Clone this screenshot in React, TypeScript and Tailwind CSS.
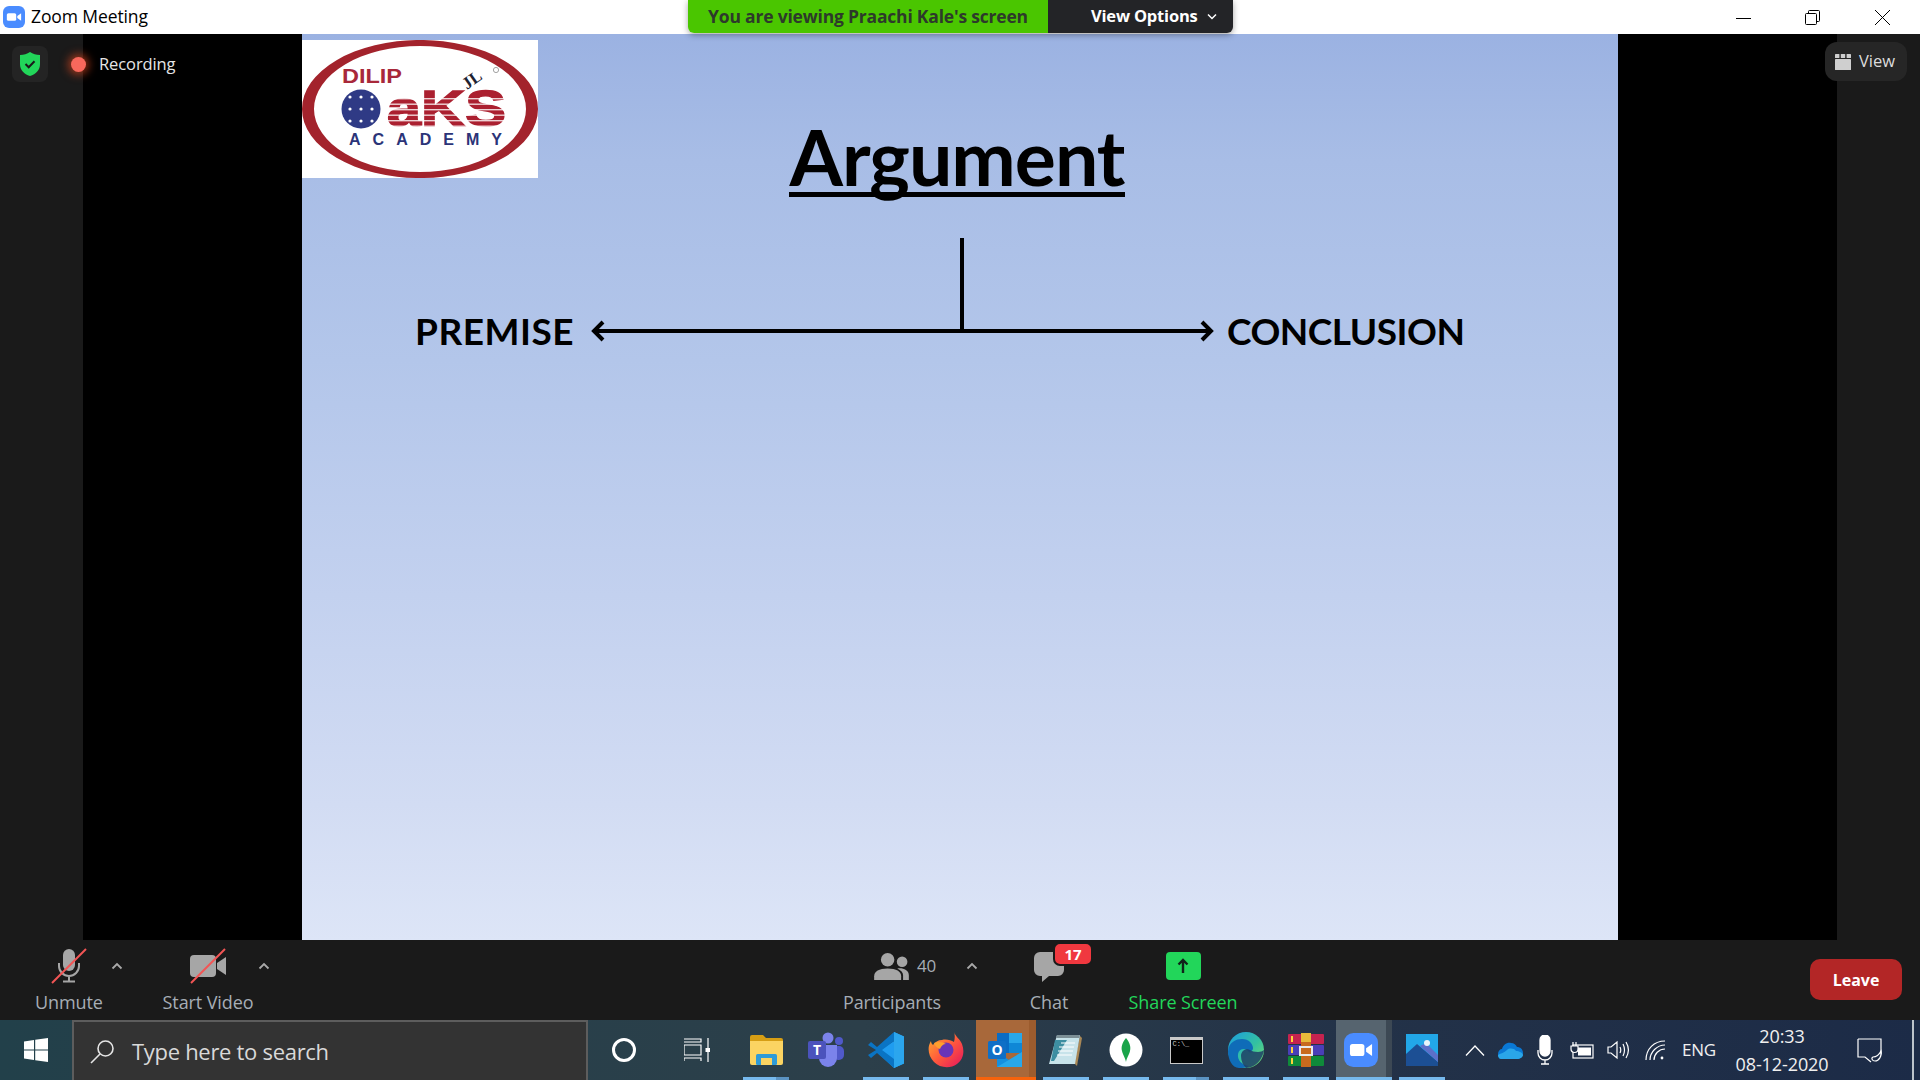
import React from "react";

const ui = "font-['Open_Sans','Noto_Sans',sans-serif]";

function ZoomGlyph({ size = 18 }: { size?: number }) {
  return (
    <svg width={size} height={size} viewBox="0 0 40 40">
      <rect width="40" height="40" rx="11" fill="#4a8cff" />
      <rect x="7" y="13" width="17" height="14" rx="3" fill="#fff" />
      <path d="M26 18l7-5v14l-7-5z" fill="#fff" />
    </svg>
  );
}

function Caret() {
  return (
    <div className="w-[14px] h-[44px] flex items-center justify-center">
      <svg width="12" height="8" viewBox="0 0 12 8" fill="none" stroke="#a9a9a9" strokeWidth="1.8">
        <path d="M1.5 6.5L6 2l4.5 4.5" />
      </svg>
    </div>
  );
}

function Logo() {
  const stripes = [98, 103.5, 109, 114.5, 120, 125.5];
  return (
    <svg width="236" height="138" viewBox="302 40 236 138" className="block">
      <rect x="302" y="40" width="236" height="138" fill="#fff" />
      <path fillRule="evenodd" d="M302 109a118 69 0 10236 0a118 69 0 10-236 0zM314 109a106 63 0 10212 0a106 63 0 10-212 0z" fill="#a3232c" />
      <text x="342" y="83" fontFamily="'Liberation Sans',sans-serif" fontWeight="700" fontSize="21" fill="#a8283a" textLength="60" lengthAdjust="spacingAndGlyphs">DILIP</text>
      <circle cx="361" cy="109" r="19.5" fill="#2f3a85" />
      {[97, 109, 121].map((y) =>
        [350, 361, 372].map((x) => <circle key={`${x}-${y}`} cx={x} cy={y} r="1.6" fill="#fff" />)
      )}
      <text x="387" y="126" fontFamily="'Liberation Sans',sans-serif" fontWeight="700" fontSize="50" fill="#ab2030" stroke="#ab2030" strokeWidth="1.5" textLength="119" lengthAdjust="spacingAndGlyphs">aKS</text>
      {stripes.map((y) => (
        <rect key={y} x="386" y={y} width="122" height="1.4" fill="#fff" opacity="0.8" />
      ))}
      <text x="467" y="90" fontFamily="'Liberation Serif',serif" fontWeight="700" fontSize="17" fill="#1d2230" transform="rotate(-35 467 90)">JL</text>
      <circle cx="496" cy="70" r="2.6" fill="none" stroke="#999" strokeWidth="0.9" />
      <text x="349" y="145" fontFamily="'Liberation Sans',sans-serif" fontWeight="700" fontSize="16" fill="#2b3478" textLength="153">ACADEMY</text>
    </svg>
  );
}

function Slot({ children, bar = "none", className = "", narrow = false }: { children: React.ReactNode; bar?: "none" | "one" | "split" | "orange" | "zoom"; className?: string; narrow?: boolean }) {
  return (
    <div className={`relative ${narrow ? "w-[56px]" : "w-[60px]"} h-[60px] shrink-0 flex items-center justify-center ${className}`}>
      {children}
      {(bar === "one" || bar === "split") && <div className="absolute bottom-0 left-[7px] w-[46px] h-[3px] bg-[#76b9ed]" />}
      {bar === "split" && <div className="absolute bottom-0 left-[40px] w-[13px] h-[3px] bg-[#5b93c2]" />}
      {bar === "orange" && <div className="absolute bottom-0 left-0 w-full h-[3px] bg-[#f7630c]" />}
      {bar === "zoom" && <div className="absolute bottom-0 left-0 w-full h-[3px] bg-[#76b9ed]" />}
    </div>
  );
}

const Explorer = () => (
  <svg width="33" height="30" viewBox="0 0 33 30">
    <path d="M0 2a2 2 0 012-2h11l3 3h15a2 2 0 012 2v3H0z" fill="#d69e14" />
    <path d="M0 6h33v22a2 2 0 01-2 2H2a2 2 0 01-2-2z" fill="#fbd462" />
    <rect x="6" y="19" width="21" height="11" rx="1.5" fill="#2e9bd8" />
    <rect x="11" y="23" width="11" height="7" fill="#fbd462" />
  </svg>
);
const Teams = () => (
  <svg width="36" height="36" viewBox="0 0 36 36">
    <circle cx="31" cy="9" r="4" fill="#5059c9" />
    <rect x="25" y="14" width="11" height="14" rx="5" fill="#5059c9" />
    <circle cx="20" cy="6" r="5.5" fill="#7b83eb" />
    <path d="M11 13h18v13a9 9 0 01-18 0z" fill="#7b83eb" />
    <rect x="0" y="9" width="18" height="18" rx="2" fill="#4b53bc" />
    <text x="9" y="23" textAnchor="middle" fontFamily="'Open Sans',sans-serif" fontWeight="700" fontSize="14" fill="#fff">T</text>
  </svg>
);
const VSCode = () => (
  <svg width="36" height="36" viewBox="0 0 36 36">
    <path d="M26 0l10 4.5v27L26 36 9 20l17-11z" fill="#1f9cf0" />
    <path d="M26 0v9L14 18l12 9v9L9 21 3 26l-3-3 8-5-8-5 3-3 6 5z" fill="#0a74c4" />
    <path d="M26 0l10 4.5v27L26 36z" fill="#2ba6ee" />
  </svg>
);
const Firefox = () => (
  <svg width="36" height="36" viewBox="0 0 36 36">
    <defs>
      <linearGradient id="ff" x1="0" y1="0" x2="1" y2="1">
        <stop offset="0" stopColor="#ffb52e" />
        <stop offset="0.5" stopColor="#ff5a3c" />
        <stop offset="1" stopColor="#e3145f" />
      </linearGradient>
    </defs>
    <path d="M26 0c1 4 6 7 8 12 3 8 1 16-5 20-7 5-17 4-23-2C0 24-1 15 3 9c0 2 1 3 2 4 2-3 5-5 9-5 4-1 9 0 12 2 1-4 1-7 0-10z" fill="url(#ff)" />
    <circle cx="18" cy="18" r="7.5" fill="#6a34b8" />
    <path d="M6 11c4-2 9-1 12 1-3 0-5 2-6 5-3-1-5-3-6-6z" fill="#ffa02d" />
  </svg>
);
const Outlook = () => (
  <svg width="36" height="36" viewBox="0 0 36 36">
    <rect x="9" y="1" width="25" height="20" fill="#0a6cc4" />
    <rect x="21" y="1" width="13" height="10" fill="#28a8ea" />
    <rect x="21" y="11" width="13" height="10" fill="#0f87d6" />
    <path d="M9 20l12 8 13-8v15H9z" fill="#1590df" />
    <path d="M9 35l25-15v15z" fill="#28a8ea" />
    <rect x="0" y="9" width="18" height="18" rx="1.5" fill="#0f6fc6" />
    <text x="9" y="23" textAnchor="middle" fontFamily="'Open Sans',sans-serif" fontWeight="700" fontSize="14" fill="#fff">O</text>
  </svg>
);
const Notepad = () => (
  <svg width="34" height="34" viewBox="0 0 34 34">
    <path d="M31 3l2 2-5 28-3-3z" fill="#a98857" />
    <path d="M8 2h23l-5 29H0z" fill="#c7e3ea" />
    <path d="M8 2h23l-1 3H7z" fill="#7c8f96" />
    <path d="M6 7h12L5 28H2z" fill="#3d8ea1" />
    <path d="M12 10h14M10 14h15M9 18h15M8 22h15" stroke="#fff" strokeWidth="1" />
  </svg>
);
const Mongo = () => (
  <svg width="34" height="34" viewBox="0 0 34 34">
    <circle cx="17" cy="17" r="16.5" fill="#fff" />
    <path d="M17 5c4 5 5 9 4 13-1 4-3 6-4 11-1-5-3-7-4-11-1-4 0-8 4-13z" fill="#1aa44a" />
  </svg>
);
const Cmd = () => (
  <div className="w-[33px] h-[27px] bg-[#c9c9c9] p-[1px] pt-[3px] flex">
    <div className="flex-1 bg-black text-[#c8c8c8] text-[7px] leading-[9px] pl-[2px] font-['Liberation_Mono',monospace]">C:\_</div>
  </div>
);
const Edge = () => (
  <svg width="36" height="36" viewBox="0 0 36 36">
    <defs>
      <linearGradient id="eg" x1="0" y1="0" x2="1" y2="1">
        <stop offset="0" stopColor="#1b9de2" />
        <stop offset="0.55" stopColor="#34c1a0" />
        <stop offset="1" stopColor="#7fe06a" />
      </linearGradient>
    </defs>
    <circle cx="18" cy="18" r="18" fill="url(#eg)" />
    <path d="M0 19C1 10 8 7 14 7c7 0 11 5 11 9 0 3-3 4-5 4h8c-3 0-7 1-7 0-4-5-10-3-11 2-1 6 4 11 11 12-3 2-7 2-10 2C4 36 0 27 0 19z" fill="#0f6cb8" />
    <path d="M13 24c0-5 5-8 9-6 2 1 4 2 8 2 2 0 5-1 6-2-1 9-9 18-18 18-3-3-5-7-5-12z" fill="#1f3f66" opacity="0.85" />
  </svg>
);
const WinRar = () => (
  <svg width="36" height="34" viewBox="0 0 36 34">
    <rect y="1" width="36" height="10" rx="1" fill="#c5234f" />
    <rect y="12" width="36" height="10" rx="1" fill="#4a3fb8" />
    <rect y="23" width="36" height="10" rx="1" fill="#0f8a3a" />
    <rect x="3" y="3" width="2" height="6" fill="#ffd23c" />
    <rect x="3" y="14" width="2" height="6" fill="#ffd23c" />
    <rect x="3" y="25" width="2" height="6" fill="#ffd23c" />
    <rect x="13" y="0" width="10" height="34" fill="#c86a1e" />
    <rect x="13" y="0" width="10" height="9" fill="#e7ba3a" />
    <rect x="12" y="14" width="12" height="8" fill="none" stroke="#e9e9e9" strokeWidth="2" />
  </svg>
);
const Photos = () => (
  <svg width="32" height="32" viewBox="0 0 32 32">
    <rect width="32" height="32" fill="#22a7e8" />
    <path d="M0 32V20L11 10l21 18v4z" fill="#1c4f94" />
    <path d="M14 12l6-3 12 12v7z" fill="#5c6fc9" />
    <circle cx="21" cy="9" r="3" fill="#e8f4fb" />
  </svg>
);

const tray = "stroke-white fill-none";

export default function App() {
  return (
    <div className={`w-[1920px] h-[1080px] overflow-hidden flex flex-col bg-black ${ui}`}>
      {/* Title bar */}
      <header className="relative h-[34px] shrink-0 bg-white flex items-center pl-[3px]">
        <ZoomGlyph size={22} />
        <span className="ml-[6px] text-[17.5px] text-black leading-none tracking-[-0.1px]">Zoom Meeting</span>
        <div className="ml-auto flex items-center pr-[30px] gap-[54px]">
          <svg width="15" height="15" viewBox="0 0 15 15" stroke="#000" fill="none"><path d="M0 8.5h15" /></svg>
          <svg width="15" height="15" viewBox="0 0 15 15" stroke="#000" fill="none" className="mr-[1px]">
            <rect x="0.5" y="3.5" width="11" height="11" rx="1" />
            <path d="M3.5 3V1.5a1 1 0 011-1h9a1 1 0 011 1v9a1 1 0 01-1 1H12" />
          </svg>
          <svg width="15" height="15" viewBox="0 0 15 15" stroke="#000" fill="none"><path d="M0 0l15 15M15 0L0 15" /></svg>
        </div>
      </header>

      {/* Main */}
      <main className="relative h-[906px] shrink-0 flex">
        <div className="w-[83px] bg-[#1a1a1a]" />
        <div className="w-[219px] bg-black" />
        <div className="w-[1316px] flex flex-col bg-[linear-gradient(180deg,#9bb2e2_0%,#a8bde6_14%,#b3c6ea_36%,#c3d1ef_62%,#d2dcf3_85%,#dde5f7_100%)]">
          <div className="relative h-[150px] shrink-0">
            <div className="absolute left-0 top-[6px]"><Logo /></div>
          </div>
          <div className="flex justify-center pr-[6px] mt-[-65px]">
            <h1 className="text-[77px] leading-[74px] font-bold text-black border-b-[5px] border-black px-[1px] h-[78px] tracking-[-1px] font-['Lato',sans-serif]">Argument</h1>
          </div>
          <div className="flex items-end pl-[113px] mt-[39px] font-['Lato',sans-serif] font-bold text-black text-[37px] leading-[40px] tracking-[-0.5px]">
            <span className="w-[175px] tracking-[0.5px]">PREMISE</span>
            <svg width="625" height="115" viewBox="0 0 625 115" fill="none" stroke="#000" strokeWidth="4" className="shrink-0">
              <path d="M372 2v93" />
              <path d="M3 95h618" />
              <path d="M13 86l-9 9 9 9M612 86l9 9-9 9" />
            </svg>
            <span className="ml-[12px]">CONCLUSION</span>
          </div>
        </div>
        <div className="w-[219px] bg-black" />
        <div className="w-[83px] bg-[#1a1a1a]" />

        {/* Overlays */}
        <div className="absolute left-[12px] top-[12px] flex items-center">
          <div className="w-[36px] h-[36px] rounded-lg bg-[#242424] flex items-center justify-center">
            <svg width="20" height="24" viewBox="0 0 20 24">
              <path d="M10 0c3 2 6 3 10 3v9c0 6-4 10-10 12C4 22 0 18 0 12V3c4 0 7-1 10-3z" fill="#22d65a" />
              <path d="M5.5 12l3.2 3.2 5.8-6" fill="none" stroke="#1a1a1a" strokeWidth="2" />
            </svg>
          </div>
          <div className="ml-[23px] w-[15px] h-[15px] rounded-full bg-[#f8685c] shadow-[0_0_8px_3px_rgba(220,70,30,0.65)]" />
          <span className="ml-[13px] text-[16.5px] text-[#e6e6e6] leading-none tracking-[-0.1px]">Recording</span>
        </div>
        <div className="absolute left-[1825px] top-[8px] w-[82px] h-[39px] rounded-xl bg-[#262626] flex items-center pl-[10px]">
          <svg width="16" height="16" viewBox="0 0 16 16" fill="#cfcfcf">
            <rect x="0" y="0" width="4.4" height="4" rx="0.6" />
            <rect x="5.8" y="0" width="4.4" height="4" rx="0.6" />
            <rect x="11.6" y="0" width="4.4" height="4" rx="0.6" />
            <rect x="0" y="5" width="16" height="11" rx="0.6" />
          </svg>
          <span className="ml-[8px] text-[16.5px] text-[#dcdcdc]">View</span>
        </div>
      </main>

      {/* View banner */}
      <div className="absolute left-[688px] top-0 h-[33px] w-[545px] flex rounded-b-md overflow-hidden shadow-[0_2px_6px_rgba(0,0,0,0.35)]">
        <div className="w-[360px] bg-[#4ac600] flex items-center justify-center text-[17.5px] font-bold tracking-[-0.2px] text-[#2d3a2b]">You are viewing Praachi Kale's screen</div>
        <div className="flex-1 bg-[#232427] flex items-center pl-[43px] text-[16.5px] font-bold tracking-[-0.2px] text-white">
          View Options
          <svg width="10" height="7" viewBox="0 0 10 7" fill="none" stroke="#fff" strokeWidth="1.5" className="ml-[9px]"><path d="M1 1.5l4 4 4-4" /></svg>
        </div>
      </div>

      {/* Toolbar */}
      <section className="h-[80px] shrink-0 bg-[#1a1a1a] flex pl-[28px] pt-[4px] pr-[18px] text-[18px] leading-[20px] text-[#a6adb5] tracking-[-0.1px]">
        <div className="w-[82px] flex flex-col items-center">
          <div className="h-[44px] flex items-center">
            <svg width="36" height="36" viewBox="0 0 36 36" fill="none">
              <rect x="12" y="1" width="12" height="22" rx="6" fill="#a6a6a6" />
              <path d="M8 15v3a10 10 0 0020 0v-3M18 28v5M12 33.5h12" stroke="#a6a6a6" strokeWidth="2" />
              <path d="M1 35L35 1" stroke="#f25555" strokeWidth="2" />
            </svg>
          </div>
          <span className="mt-[4px] whitespace-nowrap">Unmute</span>
        </div>
        <Caret />
        <div className="ml-[35px] w-[98px] flex flex-col items-center">
          <div className="h-[44px] flex items-center">
            <svg width="36" height="36" viewBox="0 0 36 36" fill="none">
              <rect x="0" y="7" width="26" height="22" rx="4" fill="#a6a6a6" />
              <path d="M27 15l9-6v18l-9-6z" fill="#a6a6a6" />
              <path d="M1 35L35 1" stroke="#f25555" strokeWidth="2" />
            </svg>
          </div>
          <span className="mt-[4px] whitespace-nowrap">Start Video</span>
        </div>
        <Caret />
        <div className="ml-[572px] w-[98px] flex flex-col items-center">
          <div className="h-[44px] flex items-center gap-[8px] pl-[26px]">
            <svg width="35" height="27" viewBox="0 0 36 28" fill="#a6a6a6">
              <circle cx="14" cy="7" r="7" />
              <path d="M0 28v-4c0-5 5-8 14-8s14 3 14 8v4z" />
              <circle cx="29" cy="9" r="5.5" />
              <path d="M24 16c5-1 12 1 12 7v5h-6v-5c0-3-2-5-6-7z" />
            </svg>
            <span className="text-[17px]">40</span>
          </div>
          <span className="mt-[4px] whitespace-nowrap">Participants</span>
        </div>
        <div className="ml-[24px]"><Caret /></div>
        <div className="ml-[40px] w-[60px] flex flex-col items-center">
          <div className="relative h-[44px] flex items-center">
            <svg width="30" height="30" viewBox="0 0 30 30" fill="#a6a6a6" className="mt-[1px]">
              <path d="M6 0h18a6 6 0 016 6v12a6 6 0 01-6 6H15l-7 6v-6H6a6 6 0 01-6-6V6a6 6 0 016-6z" />
            </svg>
            <div className="absolute left-[20px] top-[-1px] w-[36px] h-[20px] rounded-[7px] bg-[#f0383f] border-2 border-[#1a1a1a] box-content -mt-px -ml-px flex items-center justify-center text-white font-bold text-[15px] tracking-normal">17</div>
          </div>
          <span className="mt-[4px]">Chat</span>
        </div>
        <div className="ml-[44px] w-[120px] flex flex-col items-center text-[#22d65a]">
          <div className="h-[44px] flex items-center">
            <div className="w-[35px] h-[28px] rounded-[4px] bg-[#22d65a] flex items-center justify-center">
              <svg width="12" height="16" viewBox="0 0 12 16" fill="none" stroke="#10231a" strokeWidth="2.4"><path d="M6 15V2M1.5 6.5L6 2l4.5 4.5" /></svg>
            </div>
          </div>
          <span className="mt-[4px] whitespace-nowrap">Share Screen</span>
        </div>
        <button className="ml-auto mt-[15px] w-[92px] h-[41px] rounded-[10px] bg-[#b32626] text-white font-bold text-[16px] tracking-normal">Leave</button>
      </section>

      {/* Taskbar */}
      <footer className="h-[60px] shrink-0 flex items-center bg-[linear-gradient(90deg,#22404a_0%,#2c3f4a_45%,#233248_70%,#1c2b47_100%)] text-white">
        <div className="w-[72px] flex justify-center">
          <svg width="24" height="24" viewBox="0 0 24 24" fill="#fff">
            <path d="M0 3.5l10-1.5v9.4H0zM11.2 1.8L24 0v11.4H11.2zM0 12.6h10V22L0 20.5zM11.2 12.6H24V24l-12.8-1.8z" />
          </svg>
        </div>
        <div className="w-[516px] h-[60px] bg-[#333] border-2 border-b-0 border-[#5d5d5d] flex items-center pl-[16px]">
          <svg width="25" height="25" viewBox="0 0 25 25" fill="none" stroke="#e5e5e5" strokeWidth="1.6">
            <circle cx="15.5" cy="9.5" r="7.5" />
            <path d="M10 15L1 24" />
          </svg>
          <span className="ml-[17px] mt-[1px] text-[22px] text-[#d9d9d9] tracking-[-0.3px]">Type here to search</span>
        </div>
        <div className="w-[96px] pl-[24px] flex items-center">
          <div className="w-[24px] h-[24px] rounded-full border-[3px] border-white" />
        </div>
        <div className="w-[60px] flex items-center">
          <svg width="26" height="24" viewBox="0 0 26 24" fill="none" stroke="#fff" strokeWidth="1.2">
            <path d="M0 1h17v3H0M0 7h17v10H0zM0 23v-3h17v3M24 0v24" />
            <rect x="21.5" y="10" width="5" height="4" fill="#fff" stroke="none" />
          </svg>
        </div>
        <div className="flex ml-[-8px]">
          <Slot bar="split"><Explorer /></Slot>
          <Slot><Teams /></Slot>
          <Slot bar="one"><VSCode /></Slot>
          <Slot bar="one"><Firefox /></Slot>
          <Slot bar="orange" className="bg-[#a8683a]">
            <Outlook />
            <div className="absolute right-0 top-0 h-full w-[7px] bg-[#9c5c2e]" />
          </Slot>
          <Slot bar="one"><Notepad /></Slot>
          <Slot bar="one"><Mongo /></Slot>
          <Slot bar="split"><Cmd /></Slot>
          <Slot bar="one"><Edge /></Slot>
          <Slot bar="one"><WinRar /></Slot>
          <Slot bar="zoom" narrow className="bg-[#56646f] pr-[6px]">
            <ZoomGlyph size={34} />
            <div className="absolute right-0 top-0 h-full w-[6px] bg-[#3c4854]" />
          </Slot>
          <Slot bar="one"><Photos /></Slot>
        </div>
        <div className="ml-[10px] flex items-center text-[#f0f0f0]">
          <svg width="20" height="11" viewBox="0 0 20 11" className={`${tray} ml-[3px]`} strokeWidth="1.3"><path d="M1 10.5L10 1l9 9.5" /></svg>
          <svg width="25" height="17" viewBox="0 0 25 17" className="ml-[13px]">
            <path d="M4 7c1-4 5-7 9-6 3 0 5 2 6 4 3 0 6 2 6 6 0 3-2 6-6 6H5c-3 0-5-2-5-5s2-5 4-5z" fill="#0a78d4" />
            <path d="M9 8c2-2 7-2 9 1 3 0 7 2 7 4s-3 4-6 4H3c-2 0-3-2-3-4 3-2 6-2 9-5z" fill="#2aa6e8" />
          </svg>
          <svg width="16" height="30" viewBox="0 0 16 30" className={`${tray} ml-[14px]`} strokeWidth="1.3">
            <rect x="3" y="0" width="10" height="21" rx="5" fill="#fff" />
            <path d="M1 15v3a7 7 0 0014 0v-3M8 25v4M4 29h8" />
          </svg>
          <svg width="24" height="18" viewBox="0 0 24 18" className={`${tray} ml-[17px]`} strokeWidth="1.2">
            <rect x="3" y="4" width="20" height="13" />
            <rect x="8" y="6.5" width="13" height="8" fill="#fff" stroke="none" />
            <path d="M1 5h7v3a3.5 3.5 0 01-7 0zM3 1v4M6 1v4" fill="#1f2d45" />
          </svg>
          <svg width="22" height="20" viewBox="0 0 22 20" className={`${tray} ml-[13px]`} strokeWidth="1.2">
            <path d="M1 7h3l6-5v16l-6-5H1zM13 7c1 2 1 4 0 6M16 4c2 4 2 8 0 12M19 2c3 5 3 11 0 16" />
          </svg>
          <svg width="20" height="20" viewBox="0 0 20 20" className={`${tray} ml-[16px]`} strokeWidth="1.2">
            <path d="M1 20C1 9 9 1 20 1M5 20C5 12 12 5 20 5M9 20c0-6 5-11 11-11" />
            <circle cx="17" cy="18" r="1.4" fill="#fff" stroke="none" />
          </svg>
          <span className="ml-[17px] text-[17px] tracking-[-0.2px]">ENG</span>
          <div className="ml-[16px] w-[100px] text-center text-[18px] leading-[28px] tracking-[-0.1px] whitespace-nowrap">
            <div>20:33</div>
            <div>08-12-2020</div>
          </div>
          <svg width="25" height="25" viewBox="0 0 25 25" className={`${tray} ml-[25px]`} strokeWidth="1.2">
            <path d="M1 1h23v15.5M1 1v18h7l6 5" />
            <path d="M24 13c1 5-2 10-6 10-3 0-4-3-2-4 3 0 6-2 8-6z" />
          </svg>
          <div className="ml-[30px] w-[2px] h-[60px] bg-[#bcc4cc]" />
        </div>
      </footer>
    </div>
  );
}
